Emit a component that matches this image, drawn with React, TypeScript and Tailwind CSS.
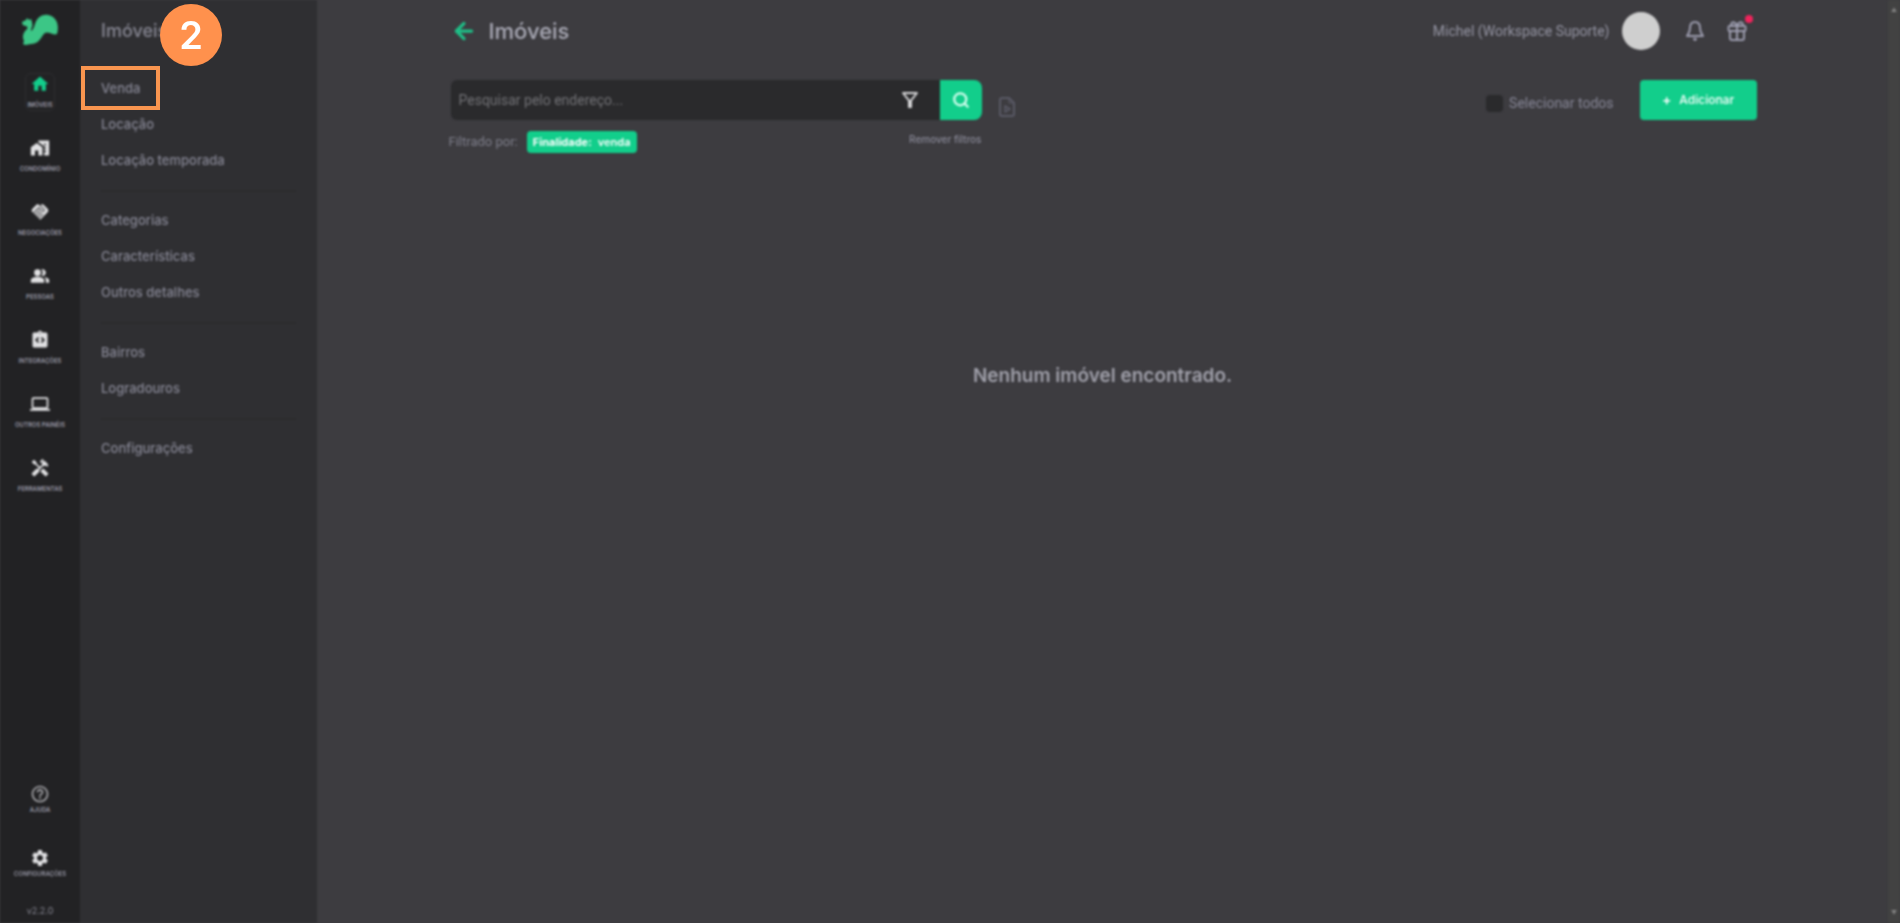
import React from 'react';
import {
  MdHandshake,
  MdHandyman,
  MdHelpOutline,
  MdHome,
  MdHomeWork,
  MdIntegrationInstructions,
  MdLaptop,
  MdOutlineFilterAlt,
  MdPeopleAlt,
  MdSettings,
} from 'react-icons/md';
import { LuArrowLeft, LuSearch } from 'react-icons/lu';
import { clsx } from 'clsx';

const railItems = [
  { icon: MdHome, label: 'IMÓVEIS', active: true },
  { icon: MdHomeWork, label: 'CONDOMÍNIO' },
  { icon: MdHandshake, label: 'NEGOCIAÇÕES' },
  { icon: MdPeopleAlt, label: 'PESSOAS' },
  { icon: MdIntegrationInstructions, label: 'INTEGRAÇÕES' },
  { icon: MdLaptop, label: 'OUTROS PAINÉIS' },
  { icon: MdHandyman, label: 'FERRAMENTAS' },
];

const menuGroups = [
  ['Venda', 'Locação', 'Locação temporada'],
  ['Categorias', 'Características', 'Outros detalhes'],
  ['Bairros', 'Logradouros'],
  ['Configurações'],
];

// squirrel: small head on the left, big curled tail on the right
const Logo = () => (
  <svg viewBox="0 0 38 32" className="w-[38px] h-8" fill="#3cc686" aria-hidden="true">
    <path d="M1 8 C2 7 4 7 5 6 L6 4 L8 6 L10 5 C11 8 12 11 11 13 C10 15 10 16 10 17 C12 16 13 13 14 10 C16 3 22 0 27 1 C34 2 39 9 36 20 C34 21 31 20 29 19 C26 18 24 18 22 21 C19 26 16 30 10 30 C7 30 5 32 2 30 L3 27 C1 23 2 19 5 16 C7 14 7 13 5 12 C3 12 1 11 1 8 Z" />
  </svg>
);

const BellIcon = () => (
  <svg viewBox="0 0 20 22" className="w-5 h-[22px]" fill="none" stroke="currentColor" strokeWidth="2" strokeLinejoin="round" strokeLinecap="round">
    <path d="M10 2 C6 2 5 5 5 8 C5 12 4 13 2 16 L18 16 C16 13 15 12 15 8 C15 5 14 2 10 2 Z" />
    <path d="M9 19 L11 19 L10 20 Z" />
  </svg>
);

const GiftIcon = () => (
  <svg viewBox="0 0 20 20" className="w-5 h-5" fill="none" stroke="currentColor" strokeWidth="2" strokeLinejoin="round" strokeLinecap="round">
    <rect x="1.5" y="5" width="17" height="5" rx="1" />
    <path d="M3 10 V17 Q3 19 5 19 H15 Q17 19 17 17 V10 M10 5 V19" />
    <path d="M10 5 C9 2 7 1 5.5 1.5 C3.500 2.200 4 5 6 5 M10 5 C11 2 13 1 14.500 1.500 C16.500 2.200 16 5 14 5" />
  </svg>
);

const ReportIcon = () => (
  <svg viewBox="0 0 18 22" className="w-[18px] h-[22px]" fill="none" stroke="currentColor" strokeWidth="2" strokeLinejoin="round" strokeLinecap="round">
    <path d="M11 2 H4 Q2 2 2 4 V18 Q2 20 4 20 H14 Q16 20 16 18 V7 Z" />
    <path d="M11 2 V7 H16" strokeWidth="1" />
    <path d="M7 10 V16 L12 13 Z" strokeWidth="1.500" />
  </svg>
);

const RailLabel = ({ children }: { children: React.ReactNode }) => (
  <span className="text-[6px] leading-[10px] font-semibold text-[#9a9aa8] whitespace-nowrap">{children}</span>
);

const Rail = () => (
  <nav className="w-20 shrink-0 bg-[#222224] flex flex-col items-center pt-[14px] pb-1">
    <a href="#" aria-label="Início">
      <Logo />
    </a>
    <div className="mt-[27px] flex flex-col gap-[26px] items-center">
      {railItems.map((item) => (
        <a
          key={item.label}
          href="#"
          className={clsx(
            'h-[38px] px-px flex flex-col items-center justify-between border rounded-md',
            item.active ? 'border-[#2e2e31]' : 'border-transparent'
          )}
        >
          <item.icon className={clsx('w-5 h-5', item.active ? 'text-[#12ce8b]' : 'text-[#e0e0e2]')} />
          <RailLabel>{item.label}</RailLabel>
        </a>
      ))}
    </div>
    <div className="mt-auto flex flex-col items-center">
      <a href="#" className="h-16 flex flex-col items-center gap-px">
        <MdHelpOutline className="w-5 h-5 text-[#a4a4a8]" />
        <RailLabel>AJUDA</RailLabel>
      </a>
      <a href="#" className="flex flex-col items-center gap-px">
        <MdSettings className="w-5 h-5 text-[#e0e0e2]" />
        <RailLabel>CONFIGURAÇÕES</RailLabel>
      </a>
      <span className="mt-6 text-[9px] leading-4 text-[#8a8a96]">v2.2.0</span>
    </div>
  </nav>
);

const Menu = () => (
  <aside className="w-[237px] shrink-0 bg-[#2f2f32] px-[21px] pt-4">
    <h2 className="text-lg leading-[30px] font-medium text-[#868692]">Imóveis</h2>
    <div className="mt-[25px]">
      {menuGroups.map((group, i) => (
        <ul key={group[0]}>
          {i > 0 && (
            <li className="h-6 flex items-center">
              <hr className="w-full border-t-2 border-[#2b2b2d]" />
            </li>
          )}
          {group.map((label) => (
            <li key={label}>
              <a href="#" className="h-9 flex items-center text-[13px] font-medium text-[#868694]">
                {label}
              </a>
            </li>
          ))}
        </ul>
      ))}
    </div>
  </aside>
);

const Header = () => (
  <header className="h-[62px] flex items-center justify-between">
    <div className="flex items-center gap-3">
      <button type="button" aria-label="Voltar" className="ml-[2px] text-[#1fbf87]">
        <LuArrowLeft className="w-[26px] h-[26px]" strokeWidth={3} />
      </button>
      <h1 className="text-[22px] font-medium text-[#aaaab6]">Imóveis</h1>
    </div>
    <div className="flex items-center pr-[10px] text-[#9c9cae]">
      <span className="font-[Roboto] text-sm text-[#9494a2]">Michel (Workspace Suporte)</span>
      <span className="ml-3 w-[38px] h-[38px] rounded-full bg-[#cfcfcf]" />
      <button type="button" aria-label="Notificações" className="ml-[25px]">
        <BellIcon />
      </button>
      <button type="button" aria-label="Novidades" className="relative ml-[22px]">
        <GiftIcon />
        <span className="absolute -top-[6px] -right-[6px] w-2 h-2 rounded-full bg-[#f0245c]" />
      </button>
    </div>
  </header>
);

const Toolbar = () => (
  <div className="mt-[18px] flex items-start justify-between">
    <div className="flex items-start gap-4">
      <div className="w-[533px]">
        <form className="flex h-10">
          <div className="ml-[2px] flex-1 flex items-center rounded-l-md bg-[#2a2a2c] pr-[18px]">
            <input
              type="text"
              aria-label="Pesquisar pelo endereço"
              placeholder="Pesquisar pelo endereço..."
              className="flex-1 bg-transparent px-2 font-[Roboto] text-sm text-[#9c9caa] placeholder:text-[#727276] outline-none"
            />
            <button type="button" aria-label="Filtros" className="text-[#d4d4d6]">
              <MdOutlineFilterAlt className="w-6 h-6" />
            </button>
          </div>
          <button
            type="submit"
            aria-label="Buscar"
            className="w-[42px] flex items-center justify-center rounded-r-lg bg-[#12ce8b] text-[#d6fff0]"
          >
            <LuSearch className="w-[18px] h-[18px]" strokeWidth={3} />
          </button>
        </form>
        <div className="mt-[11px] flex items-start">
          <span className="font-[Roboto] text-[13px] leading-[22px] text-[#7e7e8a]">Filtrado por:</span>
          <span className="ml-[9px] h-[22px] px-[6px] flex gap-[6px] rounded bg-[#12ce8b] text-[11px] leading-[22px] text-white">
            <strong className="font-bold">Finalidade:</strong>
            <span className="font-semibold">venda</span>
          </span>
          <a href="#" className="ml-auto text-[10px] leading-4 font-medium text-[#8a8a98]">
            Remover filtros
          </a>
        </div>
      </div>
      <button type="button" aria-label="Relatório" className="mt-4 text-[#5a5a66]">
        <ReportIcon />
      </button>
    </div>
    <div className="flex items-center gap-[26px]">
      <label className="mt-[6px] flex items-center gap-[6px] font-[Roboto] text-sm text-[#868696]">
        <input type="checkbox" className="appearance-none w-[17px] h-[17px] rounded-sm bg-[#2a2a2c]" />
        Selecionar todos
      </label>
      <button
        type="button"
        className="w-[117px] h-10 flex items-center justify-center gap-2 rounded bg-[#12ce8b] text-xs font-medium text-white"
      >
        <span className="text-sm font-semibold">+</span>
        <span>Adicionar</span>
      </button>
    </div>
  </div>
);

const App = () => {
  return (
    <div className="relative min-h-screen overflow-hidden bg-[#3d3c40] font-[Inter,sans-serif]">
      <div className="flex min-h-screen blur-[1px]">
        <Rail />
        <Menu />
        <main className="flex-1">
          <div className="mx-auto max-w-[1308px]">
            <Header />
            <Toolbar />
            <p className="mt-[209px] text-center text-[19px] leading-7 font-semibold text-[#a0a0aa]">
              Nenhum imóvel encontrado.
            </p>
          </div>
        </main>
        <div className="w-3 shrink-0 bg-[#424242] flex flex-col items-center justify-between py-1 text-[6px] leading-3 text-[#858585]">
          <span>▲</span>
          <span>▼</span>
        </div>
      </div>

      {/* tutorial step marker */}
      <div className="absolute left-[81px] top-[66px] w-[79px] h-11 border-4 border-[#f9954f]" />
      <div className="absolute left-40 top-1 w-[62px] h-[62px] rounded-full bg-[#ff914d] flex items-center justify-center text-white text-[38px] font-semibold">
        2
      </div>
    </div>
  );
};

export default App;
